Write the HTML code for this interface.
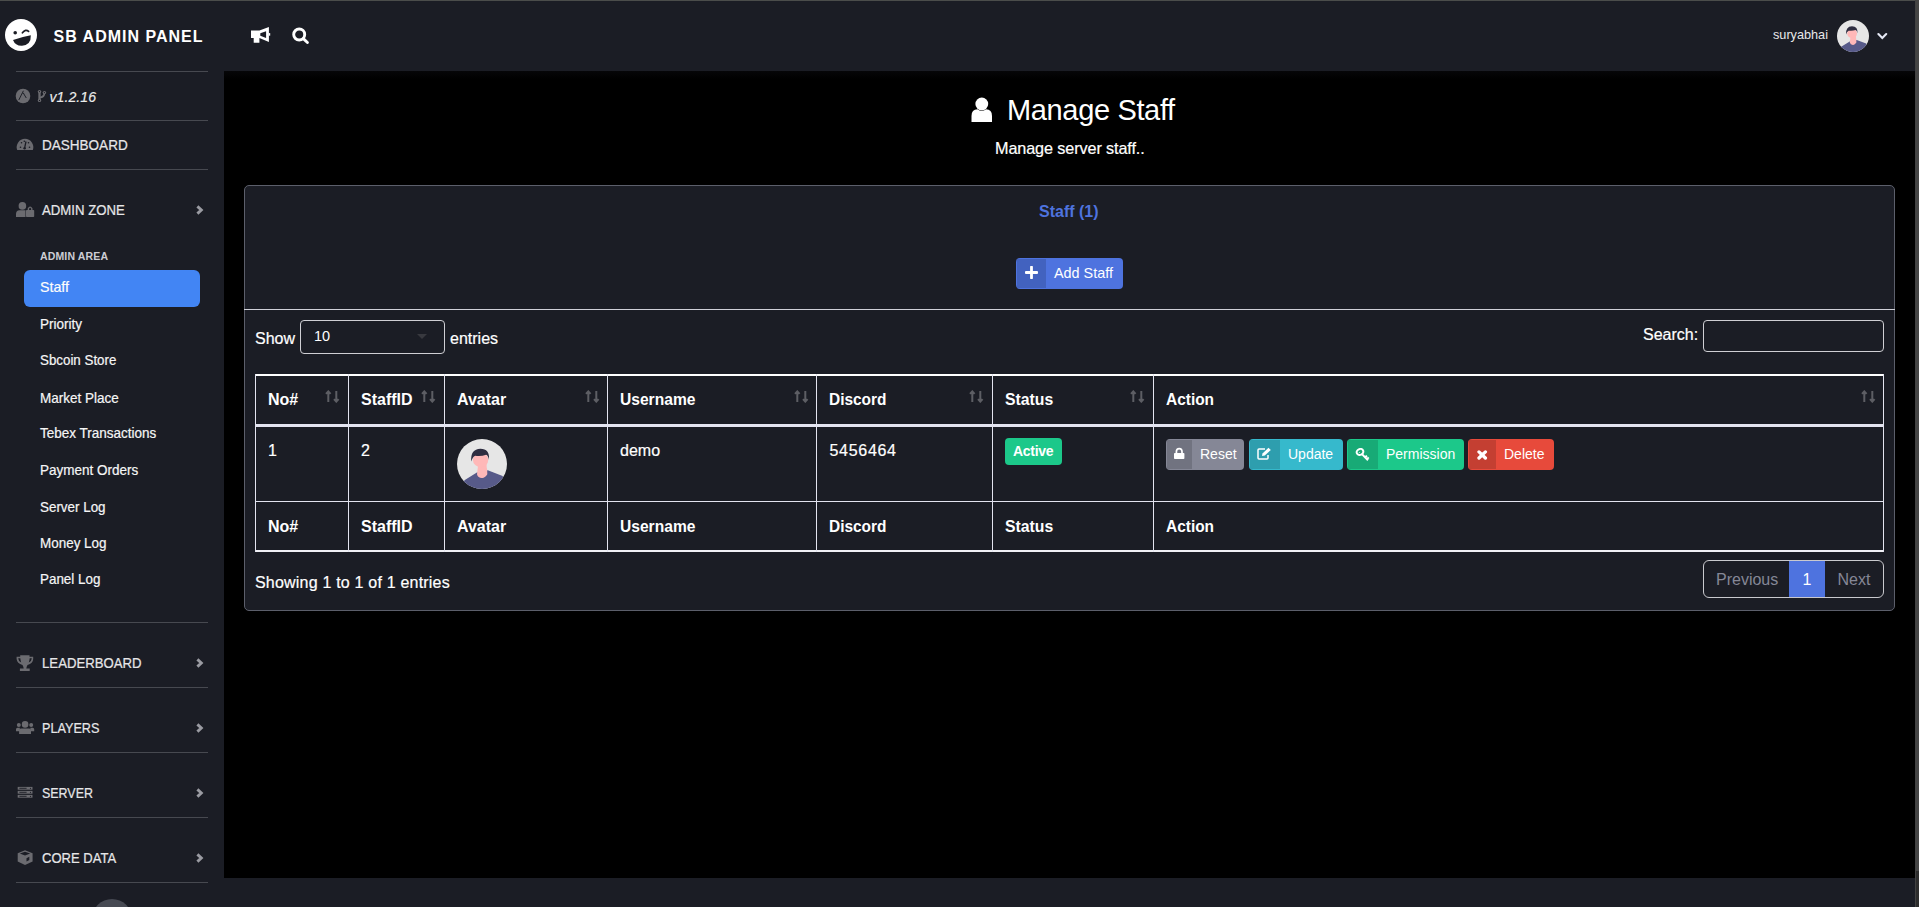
<!DOCTYPE html>
<html><head><meta charset="utf-8">
<style>
*{margin:0;padding:0;box-sizing:border-box}
html,body{width:1919px;height:907px;overflow:hidden;background:#000;font-family:"Liberation Sans",sans-serif;color:#fff}
.a{position:absolute}
.t{position:absolute;white-space:nowrap;line-height:1}
#top{position:absolute;left:0;top:0;width:1915px;height:71px;background:#1b1d25;border-top:1px solid #4b4d4b}
#scroll{position:absolute;left:1915px;top:0;width:4px;height:907px;background:linear-gradient(#454545 0,#454545 871px,#2d2d2d 871px);border-left:1px solid #424242}
#side{position:absolute;left:0;top:71px;width:224px;height:836px;background:#1b1d25}
#foot{position:absolute;left:224px;top:878px;width:1691px;height:29px;background:#1b1d25}
.dv{position:absolute;left:16px;width:192px;height:1px;background:#474950}
.nav{font-size:13.5px;color:#e6e6e8;-webkit-text-stroke:0.2px #e6e6e8}
.sub{font-size:13.6px;color:#f6f6f6;-webkit-text-stroke:0.2px #f6f6f6}
.th{font-size:16px;font-weight:bold;color:#fff}
.td{font-size:16px;color:#fff;-webkit-text-stroke:0.2px #fff}
.chev{position:absolute;left:196px;width:8px;height:10px;overflow:visible}
</style></head><body>
<div id="top">
  <svg class="a" style="left:5px;top:18px" width="32" height="32" viewBox="0 0 32 32">
    <circle cx="16" cy="16" r="16" fill="#fff"/>
    <circle cx="10.2" cy="13.8" r="1.8" fill="#1b1d25"/>
    <path d="M17.4 13.8 Q20.6 9.6 23.6 12.4" stroke="#1b1d25" stroke-width="1.7" fill="none" stroke-linecap="round"/>
    <path d="M8 21 Q16.5 18 25.8 16.3 Q26.2 26 17 26.8 Q10.3 27 8 21Z" fill="#1b1d25"/>
  </svg>
  <div class="t" style="left:53.5px;top:27.5px;font-size:16px;font-weight:bold;letter-spacing:1px">SB ADMIN PANEL</div>
  <svg class="a" style="left:251px;top:26px" width="20" height="17" viewBox="0 0 20 17">
    <path d="M0 3.6 H8.4 L17.9 0 V15.1 L8.4 10.9 V15.8 H2.7 V10.9 H0Z M9.3 6.2 V8.8 L15.1 11 V4.3Z" fill="#fff" fill-rule="evenodd"/>
    <rect x="17.8" y="6.1" width="1.4" height="2.6" fill="#fff"/>
  </svg>
  <svg class="a" style="left:292px;top:26px" width="18" height="18" viewBox="0 0 18 18">
    <circle cx="7.2" cy="7.5" r="5.5" stroke="#fff" stroke-width="2.9" fill="none"/>
    <path d="M11.3 11.6 L15.4 15.5" stroke="#fff" stroke-width="2.9" stroke-linecap="round"/>
  </svg>
  <div class="t" style="left:1773px;top:27px;font-size:13px;color:#e8e8ea;transform:scaleX(0.975);transform-origin:0 0">suryabhai</div>
  <svg class="a" style="left:1837px;top:19px" width="32" height="32" viewBox="0 0 32 32">
    <defs><clipPath id="c1"><circle cx="16" cy="16" r="16"/></clipPath></defs>
    <circle cx="16" cy="16" r="16" fill="#e6e6e6"/>
    <g clip-path="url(#c1)">
    <path d="M5 26.2 L12.7 21.4 L19.7 20 L29.2 23.6 L32 33 H0Z" fill="#575a89"/>
    <path d="M13.9 15.5 H19 Q18.8 18.5 19.3 19.5 L19.4 22.6 Q17.6 25.3 15.9 25 Q13.4 25 12.8 22.6 L13.3 18.2Z" fill="#ffb8b8"/>
    <ellipse cx="15.1" cy="13.4" rx="4.9" ry="4.6" fill="#ffb8b8"/>
    <path d="M9.1 14.4 Q8.5 6.5 15 6.3 Q21 6.3 20.5 13.4 Q20 10.6 18.6 10.1 Q15.5 11.2 11.6 10.7 Q10 11.5 9.1 14.4Z" fill="#2f2e41"/>
    </g>
  </svg>
  <svg class="a" style="left:1877px;top:31px" width="11" height="9" viewBox="0 0 11 9">
    <path d="M1.4 2 L5.3 5.9 L9.2 2" stroke="#e6e9f5" stroke-width="2.1" fill="none" stroke-linecap="round"/>
  </svg>
</div>
<div id="side">
  <div class="dv" style="top:0"></div>
  <svg class="a" style="left:15px;top:17px" width="16" height="16" viewBox="0 0 16 16">
    <circle cx="8" cy="8" r="7.3" fill="#6b6b70"/>
    <path d="M3.8 12 L7.6 4.4 M8.6 5.6 L11.3 10 M7.6 4.4 L8.4 2.8 M7.2 4.8 L9.2 5.6" stroke="#1b1d25" stroke-width="0.95" fill="none"/>
  </svg>
  <svg class="a" style="left:36px;top:18px" width="12" height="14" viewBox="0 0 12 14">
    <path d="M3.5 3 V11" stroke="#6b6b70" stroke-width="2.3"/>
    <path d="M8.4 4 Q8.4 8.2 3.5 8.6" stroke="#6b6b70" stroke-width="1.8" fill="none"/>
    <circle cx="3.5" cy="2.6" r="1.7" fill="#6b6b70"/><circle cx="3.5" cy="11.4" r="1.7" fill="#6b6b70"/><circle cx="8.4" cy="3.6" r="1.7" fill="#6b6b70"/>
    <circle cx="3.5" cy="2.6" r="0.6" fill="#1b1d25"/><circle cx="3.5" cy="11.4" r="0.6" fill="#1b1d25"/><circle cx="8.4" cy="3.6" r="0.6" fill="#1b1d25"/>
  </svg>
  <div class="t" style="left:49.5px;top:19px;font-size:14.2px;font-style:italic;color:#ececec;-webkit-text-stroke:0.15px #ececec">v1.2.16</div>
  <div class="dv" style="top:49px"></div>
  <svg class="a" style="left:16px;top:66px" width="18" height="14" viewBox="0 0 18 14">
    <path d="M1.2 13 A8.3 8.3 0 1 1 16.8 13 Z" fill="#6b6b70"/>
    <circle cx="4.5" cy="10.3" r="0.8" fill="#1b1d25"/><circle cx="13.5" cy="10.3" r="0.8" fill="#1b1d25"/>
    <circle cx="5.5" cy="5.8" r="0.8" fill="#1b1d25"/><circle cx="12.5" cy="5.8" r="0.8" fill="#1b1d25"/>
    <circle cx="8.3" cy="4.3" r="0.8" fill="#1b1d25"/>
    <path d="M8.6 11.2 L10 4.5" stroke="#1b1d25" stroke-width="1.3"/><circle cx="8.6" cy="11.3" r="1.2" fill="#1b1d25"/>
  </svg>
  <div class="t nav" style="left:42px;top:67.46px;font-size:14.35px;transform:scaleX(0.9429);transform-origin:0 0">DASHBOARD</div>
  <div class="dv" style="top:98px"></div>
  <svg class="a" style="left:16px;top:131px" width="19" height="15" viewBox="0 0 19 15">
    <circle cx="6.4" cy="3.9" r="3.8" fill="#6b6b70"/>
    <path d="M0 15 V12 Q0 8.2 3.5 8.2 H9.5 V15Z" fill="#6b6b70"/>
    <rect x="10" y="8" width="8.2" height="7" rx="0.8" fill="#6b6b70"/>
    <path d="M12.4 8.3 V6.6 Q14.1 3.6 15.8 6.6 V8.3" stroke="#6b6b70" stroke-width="1.4" fill="none"/>
  </svg>
  <div class="t nav" style="left:42px;top:132.46px;font-size:14.35px;transform:scaleX(0.9209);transform-origin:0 0">ADMIN ZONE</div>
  <svg class="chev" style="top:134px" viewBox="0 0 8 10"><path d="M1.4 1.4 L5.3 5 L1.4 8.6" stroke="#9a9ba2" stroke-width="2.9" fill="none"/></svg>
  <div class="t" style="left:40px;top:179.5px;font-size:10.5px;font-weight:bold;color:#cdcdd4;letter-spacing:0.15px">ADMIN AREA</div>
  <div class="a" style="left:24px;top:199px;width:176px;height:37px;background:#4285f4;border-radius:6px"></div>
  <div class="t sub" style="left:40px;top:210.26px;font-size:13.90px;transform:scaleX(1.0219);transform-origin:0 0;color:#fff">Staff</div>
  <div class="t sub" style="left:40px;top:247.26px;font-size:13.90px;transform:scaleX(0.9730);transform-origin:0 0">Priority</div>
  <div class="t sub" style="left:40px;top:283.30px;font-size:13.90px;transform:scaleX(0.9601);transform-origin:0 0">Sbcoin Store</div>
  <div class="t sub" style="left:40px;top:320.72px;font-size:13.90px;transform:scaleX(0.9729);transform-origin:0 0">Market Place</div>
  <div class="t sub" style="left:40px;top:355.80px;font-size:13.90px;transform:scaleX(0.9717);transform-origin:0 0">Tebex Transactions</div>
  <div class="t sub" style="left:40px;top:392.72px;font-size:13.90px;transform:scaleX(0.9723);transform-origin:0 0">Payment Orders</div>
  <div class="t sub" style="left:40px;top:430.22px;font-size:13.90px;transform:scaleX(0.9648);transform-origin:0 0">Server Log</div>
  <div class="t sub" style="left:40px;top:465.72px;font-size:13.90px;transform:scaleX(0.9682);transform-origin:0 0">Money Log</div>
  <div class="t sub" style="left:40px;top:501.76px;font-size:13.90px;transform:scaleX(0.9646);transform-origin:0 0">Panel Log</div>
  <div class="dv" style="top:551px"></div>
  <svg class="a" style="left:16px;top:584px" width="18" height="16" viewBox="0 0 18 16">
    <path d="M4.2 0.3 H13.5 V1.8 H17.2 V4 Q17 8.5 11.5 10 Q10.5 11.8 10.3 13.5 H13.7 V16 H3.9 V13.5 H7.7 Q7.5 11.8 6.5 10 Q1 8.5 0.6 4 V1.8 H4.2Z M2.2 3.3 Q2.4 6.5 5.2 7.6 Q4.5 5.5 4.3 3.3Z M15.8 3.3 Q15.6 6.5 12.8 7.6 Q13.5 5.5 13.7 3.3Z" fill="#6b6b70" fill-rule="evenodd"/>
  </svg>
  <div class="t nav" style="left:42px;top:585.04px;font-size:14.35px;transform:scaleX(0.9191);transform-origin:0 0">LEADERBOARD</div>
  <svg class="chev" style="top:587px" viewBox="0 0 8 10"><path d="M1.4 1.4 L5.3 5 L1.4 8.6" stroke="#9a9ba2" stroke-width="2.9" fill="none"/></svg>
  <div class="dv" style="top:616px"></div>
  <svg class="a" style="left:16px;top:650px" width="19" height="14" viewBox="0 0 19 14">
    <circle cx="2.8" cy="3.9" r="2" fill="#6b6b70"/><circle cx="15.2" cy="3.9" r="2" fill="#6b6b70"/>
    <circle cx="9.1" cy="3.4" r="3.3" fill="#6b6b70"/>
    <path d="M0 10.3 V8.3 Q0 6.8 1.5 6.8 H3.8 L3.9 10.3Z M18.2 10.3 V8.3 Q18.2 6.8 16.7 6.8 H14.4 L14.3 10.3Z" fill="#6b6b70"/>
    <path d="M3.1 13 V9.3 Q3.1 7.4 5 7.4 H13.2 Q15 7.4 15 9.3 V13Z" fill="#6b6b70"/>
  </svg>
  <div class="t nav" style="left:42px;top:650.17px;font-size:14.35px;transform:scaleX(0.8818);transform-origin:0 0">PLAYERS</div>
  <svg class="chev" style="top:652px" viewBox="0 0 8 10"><path d="M1.4 1.4 L5.3 5 L1.4 8.6" stroke="#9a9ba2" stroke-width="2.9" fill="none"/></svg>
  <div class="dv" style="top:681px"></div>
  <svg class="a" style="left:17px;top:715px" width="16" height="12" viewBox="0 0 16 12">
    <rect x="0.7" y="0.9" width="14.8" height="2.8" fill="#6b6b70"/><rect x="0.7" y="4.9" width="14.8" height="2.8" fill="#6b6b70"/><rect x="0.7" y="8.9" width="14.8" height="2.8" fill="#6b6b70"/>
    <path d="M2.4 2.3 H9.6 M2.4 6.3 H9.6 M2.4 10.3 H9.6" stroke="#1b1d25" stroke-width="0.9"/>
    <circle cx="13.5" cy="2.3" r="0.6" fill="#1b1d25"/><circle cx="13.5" cy="6.3" r="0.6" fill="#1b1d25"/><circle cx="13.5" cy="10.3" r="0.6" fill="#1b1d25"/>
  </svg>
  <div class="t nav" style="left:42px;top:715.00px;font-size:14.35px;transform:scaleX(0.8673);transform-origin:0 0">SERVER</div>
  <svg class="chev" style="top:717px" viewBox="0 0 8 10"><path d="M1.4 1.4 L5.3 5 L1.4 8.6" stroke="#9a9ba2" stroke-width="2.9" fill="none"/></svg>
  <div class="dv" style="top:746px"></div>
  <svg class="a" style="left:17px;top:778px" width="16" height="16" viewBox="0 0 16 16">
    <path d="M8 1.2 L15.6 4.2 V12.5 L8 15.9 L0.7 12.5 V4.2Z" fill="#6b6b70"/>
    <path d="M2.8 4.6 L8 2.8 L13.2 4.6 L8 6.6Z" fill="#1b1d25"/>
    <path d="M9.5 9.2 L12.3 7.8 V11 L9.5 12.4Z" fill="#1b1d25"/>
  </svg>
  <div class="t nav" style="left:42px;top:779.54px;font-size:14.35px;transform:scaleX(0.9083);transform-origin:0 0">CORE DATA</div>
  <svg class="chev" style="top:782px" viewBox="0 0 8 10"><path d="M1.4 1.4 L5.3 5 L1.4 8.6" stroke="#9a9ba2" stroke-width="2.9" fill="none"/></svg>
  <div class="dv" style="top:811px"></div>
  <div class="a" style="left:92px;top:828px;width:40px;height:40px;border-radius:50%;background:#474a53"></div>
</div>
<div id="foot"></div>
<div id="main">
  <div class="a" style="left:224px;top:71px;width:1691px;height:8px;background:linear-gradient(#060608,#000)"></div>
  <svg class="a" style="left:971px;top:97px" width="22" height="25" viewBox="0 0 22 25">
    <circle cx="10.8" cy="7" r="6.4" fill="#fff"/>
    <path d="M0.5 25 V19 Q0.5 12.3 6.5 12.3 Q8.5 14 10.8 14 Q13 14 15 12.3 Q21 12.3 21 19 V25Z" fill="#fff"/>
  </svg>
  <div class="t" style="left:1007px;top:96px;font-size:29px;letter-spacing:-0.35px">Manage Staff</div>
  <div class="t" style="left:995px;top:140px;font-size:16.2px;letter-spacing:-0.1px;-webkit-text-stroke:0.2px #fff">Manage server staff..</div>
  <div class="a" style="left:244px;top:185px;width:1651px;height:426px;background:#1b1d25;border:1px solid #5c5f6b;border-radius:5px"></div>
  <div class="t" style="left:1039px;top:203.5px;font-size:16px;font-weight:bold;color:#4e73df">Staff (1)</div>
  <div class="a" style="left:1016px;top:258px;width:107px;height:31px;background:#4e73df;border-radius:4px;overflow:hidden">
    <div class="a" style="left:1px;top:1px;width:29px;height:29px;background:#4262bf"></div>
  </div>
  <svg class="a" style="left:1025px;top:266px" width="13" height="13" viewBox="0 0 13 13"><path d="M6.5 1 V12 M1 6.5 H12" stroke="#fff" stroke-width="2.8" stroke-linecap="round"/></svg>
  <div class="t" style="left:1054px;top:265.5px;font-size:14.4px">Add Staff</div>
  <div class="a" style="left:244px;top:309px;width:1651px;height:1px;background:#cfd0d8"></div>

  <div class="t" style="left:255px;top:331px;font-size:16px;-webkit-text-stroke:0.2px #fff">Show</div>
  <div class="a" style="left:300px;top:320px;width:145px;height:34px;border:1px solid #cfcfd4;border-radius:4px"></div>
  <div class="t" style="left:314px;top:328.5px;font-size:14.5px">10</div>
  <svg class="a" style="left:417px;top:334px" width="10" height="6" viewBox="0 0 10 6"><path d="M0 0 H10 L5 5Z" fill="#38393f"/></svg>
  <div class="t" style="left:450px;top:331px;font-size:16px;-webkit-text-stroke:0.2px #fff">entries</div>
  <div class="t" style="left:1643px;top:327px;font-size:16px;-webkit-text-stroke:0.2px #fff">Search:</div>
  <div class="a" style="left:1703px;top:320px;width:181px;height:32px;border:1px solid #cfcfd4;border-radius:4px"></div>

  <!-- table -->
  <div class="a" style="left:255px;top:374px;width:1629px;height:2px;background:#fff"></div>
  <div class="a" style="left:255px;top:424px;width:1629px;height:3px;background:#e3e4f0"></div>
  <div class="a" style="left:255px;top:501px;width:1629px;height:1px;background:#e3e4f0"></div>
  <div class="a" style="left:255px;top:550px;width:1629px;height:2px;background:#f0f0f5"></div>
  <div class="a" style="left:255px;top:374px;width:1px;height:178px;background:#e3e4f0"></div>
  <div class="a" style="left:348px;top:374px;width:1px;height:178px;background:#e3e4f0"></div>
  <div class="a" style="left:444px;top:374px;width:1px;height:178px;background:#e3e4f0"></div>
  <div class="a" style="left:607px;top:374px;width:1px;height:178px;background:#e3e4f0"></div>
  <div class="a" style="left:816px;top:374px;width:1px;height:178px;background:#e3e4f0"></div>
  <div class="a" style="left:992px;top:374px;width:1px;height:178px;background:#e3e4f0"></div>
  <div class="a" style="left:1153px;top:374px;width:1px;height:178px;background:#e3e4f0"></div>
  <div class="a" style="left:1883px;top:374px;width:1px;height:178px;background:#e3e4f0"></div>

  <div class="t th" style="left:268px;top:392px">No#</div>
  <div class="t th" style="left:361px;top:392px">StaffID</div>
  <div class="t th" style="left:457px;top:392px">Avatar</div>
  <div class="t th" style="left:620px;top:392px;transform:scaleX(0.975);transform-origin:0 0">Username</div>
  <div class="t th" style="left:829px;top:392px;transform:scaleX(0.965);transform-origin:0 0">Discord</div>
  <div class="t th" style="left:1005px;top:392px;transform:scaleX(0.985);transform-origin:0 0">Status</div>
  <div class="t th" style="left:1166px;top:392px;transform:scaleX(0.965);transform-origin:0 0">Action</div>
  <svg class="a" style="left:325px;top:390px" width="15" height="13" viewBox="0 0 15 13"><path d="M3.3 12 V1.8 M1 3.9 L3.3 1.4 L5.6 3.9" stroke="#5d5e64" stroke-width="2" fill="none"/><path d="M11.3 1 V11.2 M9 9.1 L11.3 11.6 L13.6 9.1" stroke="#5d5e64" stroke-width="2" fill="none"/></svg>
<svg class="a" style="left:421px;top:390px" width="15" height="13" viewBox="0 0 15 13"><path d="M3.3 12 V1.8 M1 3.9 L3.3 1.4 L5.6 3.9" stroke="#5d5e64" stroke-width="2" fill="none"/><path d="M11.3 1 V11.2 M9 9.1 L11.3 11.6 L13.6 9.1" stroke="#5d5e64" stroke-width="2" fill="none"/></svg>
<svg class="a" style="left:585px;top:390px" width="15" height="13" viewBox="0 0 15 13"><path d="M3.3 12 V1.8 M1 3.9 L3.3 1.4 L5.6 3.9" stroke="#5d5e64" stroke-width="2" fill="none"/><path d="M11.3 1 V11.2 M9 9.1 L11.3 11.6 L13.6 9.1" stroke="#5d5e64" stroke-width="2" fill="none"/></svg>
<svg class="a" style="left:794px;top:390px" width="15" height="13" viewBox="0 0 15 13"><path d="M3.3 12 V1.8 M1 3.9 L3.3 1.4 L5.6 3.9" stroke="#5d5e64" stroke-width="2" fill="none"/><path d="M11.3 1 V11.2 M9 9.1 L11.3 11.6 L13.6 9.1" stroke="#5d5e64" stroke-width="2" fill="none"/></svg>
<svg class="a" style="left:969px;top:390px" width="15" height="13" viewBox="0 0 15 13"><path d="M3.3 12 V1.8 M1 3.9 L3.3 1.4 L5.6 3.9" stroke="#5d5e64" stroke-width="2" fill="none"/><path d="M11.3 1 V11.2 M9 9.1 L11.3 11.6 L13.6 9.1" stroke="#5d5e64" stroke-width="2" fill="none"/></svg>
<svg class="a" style="left:1130px;top:390px" width="15" height="13" viewBox="0 0 15 13"><path d="M3.3 12 V1.8 M1 3.9 L3.3 1.4 L5.6 3.9" stroke="#5d5e64" stroke-width="2" fill="none"/><path d="M11.3 1 V11.2 M9 9.1 L11.3 11.6 L13.6 9.1" stroke="#5d5e64" stroke-width="2" fill="none"/></svg>
<svg class="a" style="left:1861px;top:390px" width="15" height="13" viewBox="0 0 15 13"><path d="M3.3 12 V1.8 M1 3.9 L3.3 1.4 L5.6 3.9" stroke="#5d5e64" stroke-width="2" fill="none"/><path d="M11.3 1 V11.2 M9 9.1 L11.3 11.6 L13.6 9.1" stroke="#5d5e64" stroke-width="2" fill="none"/></svg>


  <div class="t td" style="left:268px;top:443px">1</div>
  <div class="t td" style="left:361px;top:443px">2</div>
  <svg class="a" style="left:457px;top:439px" width="50" height="50" viewBox="0 0 32 32">
    <circle cx="16" cy="16" r="16" fill="#e6e6e6"/>
    <g clip-path="url(#c1)">
    <path d="M5 26.2 L12.7 21.4 L19.7 20 L29.2 23.6 L32 33 H0Z" fill="#575a89"/>
    <path d="M13.9 15.5 H19 Q18.8 18.5 19.3 19.5 L19.4 22.6 Q17.6 25.3 15.9 25 Q13.4 25 12.8 22.6 L13.3 18.2Z" fill="#ffb8b8"/>
    <ellipse cx="15.1" cy="13.4" rx="4.9" ry="4.6" fill="#ffb8b8"/>
    <path d="M9.1 14.4 Q8.5 6.5 15 6.3 Q21 6.3 20.5 13.4 Q20 10.6 18.6 10.1 Q15.5 11.2 11.6 10.7 Q10 11.5 9.1 14.4Z" fill="#2f2e41"/>
    </g>
  </svg>
  <div class="t td" style="left:620px;top:443px">demo</div>
  <div class="t td" style="left:829.5px;top:443px;letter-spacing:0.7px">5456464</div>
  <div class="a" style="left:1005px;top:438px;width:57px;height:27px;background:#1cc88a;border-radius:4px"></div>
  <div class="t" style="left:1013px;top:444px;font-size:14px;font-weight:bold;letter-spacing:-0.3px">Active</div>
  <div class="a" style="left:1166px;top:439px;width:78px;height:31px;background:#858796;border-radius:4px;overflow:hidden"><div class="a" style="left:1px;top:1px;width:25px;height:29px;background:#717380"></div></div>
  <svg class="a" style="left:1174px;top:447px" width="11" height="13" viewBox="0 0 11 13"><rect x="0" y="6" width="10.4" height="6" rx="0.8" fill="#fff"/><path d="M2.4 6.5 V4.6 Q2.4 1.6 5.2 1.6 Q8 1.6 8 4.6 V6.5" stroke="#fff" stroke-width="1.7" fill="none"/></svg>
  <div class="t" style="left:1200px;top:447.2px;font-size:14px;color:#fff">Reset</div>
<div class="a" style="left:1249px;top:439px;width:94px;height:31px;background:#36b9cc;border-radius:4px;overflow:hidden"><div class="a" style="left:1px;top:1px;width:30px;height:29px;background:#2e9eae"></div></div>
  <svg class="a" style="left:1257px;top:447px" width="15" height="13" viewBox="0 0 15 13"><path d="M8 2 H2 Q1 2 1 3 V11 Q1 12 2 12 H10 Q11 12 11 11 V8" stroke="#fff" stroke-width="1.5" fill="none"/><path d="M5 9 L5.5 6.5 L11.5 0.8 L13.8 3.1 L7.8 8.6Z" fill="#fff"/></svg>
  <div class="t" style="left:1288px;top:447.2px;font-size:14px;color:#fff">Update</div>
<div class="a" style="left:1347px;top:439px;width:117px;height:31px;background:#1cc88a;border-radius:4px;overflow:hidden"><div class="a" style="left:1px;top:1px;width:30px;height:29px;background:#18aa76"></div></div>
  <svg class="a" style="left:1355px;top:448px" width="15" height="14" viewBox="0 0 15 14"><ellipse cx="5" cy="3.95" rx="3.4" ry="2.9" transform="rotate(-25 5 3.95)" stroke="#fff" stroke-width="2" fill="none"/><path d="M7.2 6.4 L13 12.2 M10.2 9.3 L11.9 7.6 M12 11.1 L13.7 9.4" stroke="#fff" stroke-width="2" fill="none"/><circle cx="4.3" cy="4.6" r="0.5" fill="#fff"/></svg>
  <div class="t" style="left:1386px;top:447.2px;font-size:14px;color:#fff">Permission</div>
<div class="a" style="left:1468px;top:439px;width:86px;height:31px;background:#e74a3b;border-radius:4px;overflow:hidden"><div class="a" style="left:1px;top:1px;width:27px;height:29px;background:#c43f32"></div></div>
  <svg class="a" style="left:1477px;top:449.5px" width="10.5" height="10" viewBox="0 0 10.5 10"><path d="M2 1.9 L8.4 8 M8.4 1.9 L2 8" stroke="#fff" stroke-width="3.3" stroke-linecap="round"/></svg>
  <div class="t" style="left:1504px;top:447.2px;font-size:14px;color:#fff">Delete</div>


  <div class="t th" style="left:268px;top:518.5px">No#</div>
  <div class="t th" style="left:361px;top:518.5px">StaffID</div>
  <div class="t th" style="left:457px;top:518.5px">Avatar</div>
  <div class="t th" style="left:620px;top:518.5px;transform:scaleX(0.975);transform-origin:0 0">Username</div>
  <div class="t th" style="left:829px;top:518.5px;transform:scaleX(0.965);transform-origin:0 0">Discord</div>
  <div class="t th" style="left:1005px;top:518.5px;transform:scaleX(0.985);transform-origin:0 0">Status</div>
  <div class="t th" style="left:1166px;top:518.5px;transform:scaleX(0.965);transform-origin:0 0">Action</div>

  <div class="t" style="left:255px;top:575px;font-size:16px;letter-spacing:0.2px;-webkit-text-stroke:0.2px #fff">Showing 1 to 1 of 1 entries</div>
  <div class="a" style="left:1703px;top:560px;width:181px;height:38px;border:1px solid #c9c9ce;border-radius:6px;overflow:hidden">
    <div class="a" style="left:85px;top:-1px;width:36px;height:38px;background:#4e73df"></div>
  </div>
  <div class="t" style="left:1716px;top:571.5px;font-size:16px;color:#858796">Previous</div>
  <div class="t" style="left:1802.5px;top:571.5px;font-size:16px;color:#fff">1</div>
  <div class="t" style="left:1837.5px;top:571.5px;font-size:16px;color:#858796">Next</div>
</div>
<div id="scroll"></div>
</body></html>
